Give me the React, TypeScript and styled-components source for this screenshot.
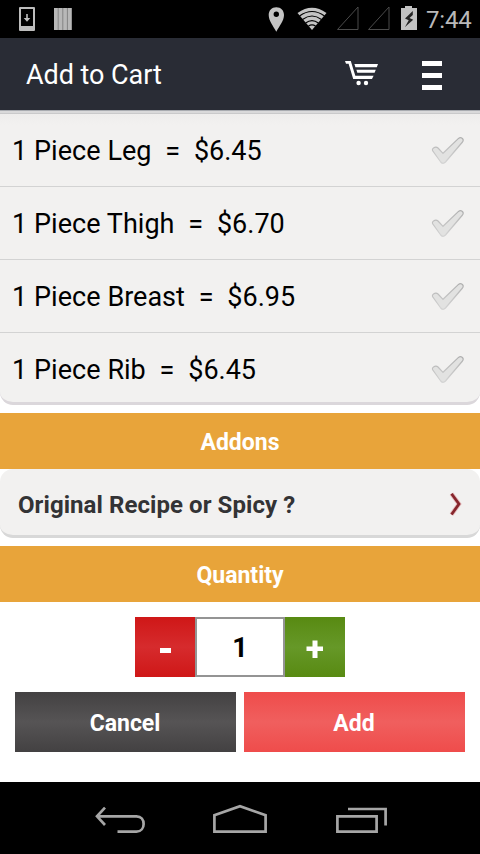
import React, { useState } from "react";
import styled, { createGlobalStyle } from "styled-components";

const GlobalStyle = createGlobalStyle`
  * { box-sizing: border-box; }
  body { margin: 0; background: #fff; font-family: Roboto, sans-serif; }
  button { font-family: inherit; border: 0; padding: 0; cursor: pointer; }
`;

const Screen = styled.div`
  width: 480px;
  height: 854px;
  display: flex;
  flex-direction: column;
  background: #fff;
  overflow: hidden;
`;

const StatusBar = styled.div`
  flex: none;
  height: 38px;
  background: #000;
  display: flex;
  justify-content: space-between;
`;

const StatusGroup = styled.div`
  display: flex;
`;

const Clock = styled.span`
  width: 54px;
  color: #b9b9b9;
  font-size: 24px;
  line-height: 40px;
  letter-spacing: -0.2px;
`;

const Header = styled.header`
  flex: none;
  height: 72px;
  background: #292c35;
  display: flex;
  align-items: center;
  padding-left: 26px;
`;

const Title = styled.h1`
  flex: 1;
  margin: 0;
  padding-top: 2px;
  color: #fff;
  font-size: 27px;
  font-weight: 400;
  line-height: 32px;
  letter-spacing: -0.05px;
`;

const IconButton = styled.button<{ $w: number }>`
  width: ${(p) => p.$w}px;
  height: 72px;
  background: none;
  svg { display: block; }
`;

const Options = styled.ul`
  flex: none;
  list-style: none;
  margin: 0;
  padding: 0;
  height: 295px;
  border-top: 1px solid #a8abb0;
  border-bottom: 3px solid #dbd7db;
  border-radius: 0 0 13px 13px;
  background: linear-gradient(#d9d9da 0 2px, #c9c9ca 2px 3px, #eeedec 3px, #f2f1f0 14px);
  padding-top: 3px;
`;

const OptionRow = styled.li`
  height: 73px;
  display: flex;
  align-items: center;
  justify-content: space-between;
  padding: 2px 15px 0 12px;
  border-bottom: 1px solid #d3d3d3;
  &:last-child { border-bottom: 0; height: 72px; }
`;

const OptionText = styled.span`
  font-size: 27px;
  line-height: 32px;
  word-spacing: 0.22px;
  color: #000;
  white-space: pre;
`;

const Band = styled.h2`
  flex: none;
  margin: 8px 0 0;
  height: 56px;
  line-height: 59px;
  text-align: center;
  font-size: 23px;
  font-weight: 700;
  color: #fff;
  background: #e8a43a;
`;

const AddonCard = styled.button`
  flex: none;
  width: 480px;
  height: 69px;
  display: flex;
  align-items: center;
  justify-content: space-between;
  padding: 5px 17px 0 18px;
  background: #f2f1f0;
  border-bottom: 3px solid #d8d8d8;
  border-radius: 13px;
`;

const AddonText = styled.span`
  font-size: 24px;
  font-weight: 700;
  letter-spacing: 0.07px;
  color: #333335;
  white-space: nowrap;
`;

const Stepper = styled.div`
  flex: none;
  margin: 15px auto 0;
  display: grid;
  grid-template-columns: 60px 90px 60px;
  grid-template-rows: 60px;
`;

const StepButton = styled.button<{ $edge: string; $mid: string }>`
  background: linear-gradient(${(p) => p.$edge}, ${(p) => p.$mid}, ${(p) => p.$edge});
  svg { display: block; }
`;

const Count = styled.div`
  border: 2px solid #949494;
  text-align: center;
  font-size: 27px;
  font-weight: 700;
  line-height: 59px;
  color: #000;
`;

const Actions = styled.div`
  flex: none;
  display: grid;
  grid-template-columns: 1fr 1fr;
  gap: 8px;
  padding: 15px 15px 30px;
`;

const ActionButton = styled.button<{ $edge: string; $mid: string }>`
  height: 60px;
  padding: 3px 1px 0 0;
  color: #fff;
  font-size: 23px;
  font-weight: 700;
  background: linear-gradient(${(p) => p.$edge}, ${(p) => p.$mid}, ${(p) => p.$edge});
`;

const NavBar = styled.nav`
  flex: none;
  height: 72px;
  background: #000;
  display: flex;
  justify-content: center;
`;

const NavButton = styled.button`
  width: 120px;
  height: 72px;
  background: none;
  svg { display: block; }
`;

const Check = () => (
  <svg width="34" height="30" viewBox="0 0 34 30">
    <defs>
      <linearGradient id="rim" x1="0" y1="0" x2="0" y2="1">
        <stop offset="0" stopColor="#b0b0b0" />
        <stop offset="1" stopColor="#d4d4d4" />
      </linearGradient>
    </defs>
    <path
      d="M1.5 14.5Q1 13 2.5 12Q5 10.2 7 12L12 17.3L27.5 2.4Q29.5 .9 31.4 2.5Q33 4.1 31.5 6L14.5 26Q12 28.6 9.7 26Z"
      fill="#e2e2e1"
      stroke="url(#rim)"
      strokeWidth="1.2"
    />
  </svg>
);

const options = [
  { name: "1 Piece Leg", price: "$6.45" },
  { name: "1 Piece Thigh", price: "$6.70" },
  { name: "1 Piece Breast", price: "$6.95" },
  { name: "1 Piece Rib", price: "$6.45" },
];

export default function App() {
  const [quantity, setQuantity] = useState(1);
  return (
    <>
      <GlobalStyle />
      <Screen>
        <StatusBar>
          <StatusGroup>
            <svg width="90" height="38" viewBox="0 0 90 38">
              <path fill="#bdbdbd" fillRule="evenodd" d="M20 7H34Q35 7 35 8V30Q35 31 34 31H20Q19 31 19 30V8Q19 7 20 7ZM21 9V26H33V9Z" />
              <path fill="#bdbdbd" d="M26.2 14H27.8V18H30.3L27 21.7L23.7 18H26.2Z" />
              <path fill="#b8b8b8" d="M54 8H71.8V30H54Z" />
              <path stroke="#777" strokeWidth=".8" d="M58.2 8V30M62.8 8V30M67.4 8V30" />
            </svg>
          </StatusGroup>
          <StatusGroup>
            <svg width="166" height="38" viewBox="260 0 166 38">
              <path fill="#c4c4c4" fillRule="evenodd" d="M276.3 7.2C281 7.2 284 10.5 284 15C284 20.5 279.5 26 276.3 31.7C273.1 26 268.7 20.5 268.7 15C268.7 10.5 271.7 7.2 276.3 7.2ZM276.3 11.5A2.7 2.7 0 1 0 276.3 16.9A2.7 2.7 0 1 0 276.3 11.5Z" />
              <path fill="#c4c4c4" d="M297.5 13Q312 2.5 326.5 13L312 30Z" />
              <path fill="none" stroke="#000" strokeWidth="1.2" d="M299.5 16Q312 7 324.5 16M302.5 19.5Q312 12.5 321.5 19.5M305.6 23Q312 18.2 318.4 23M308.3 26.2Q312 23.6 315.7 26.2" />
              <path fill="none" stroke="#4b4b4b" strokeWidth="1" d="M337.5 29.5H358V7ZM368.5 29.5H389V7Z" />
              <path fill="#c2c2c2" d="M405 6H412V8H417V30H401V8H405Z" />
              <path fill="#252525" d="M412.8 11L405 18.6L408.7 20.2L405 27L413.2 19.7L409.5 17.9L412.8 15Z" />
            </svg>
            <Clock>7:44</Clock>
          </StatusGroup>
        </StatusBar>
        <Header>
          <Title>Add to Cart</Title>
          <IconButton $w={60} aria-label="Cart">
            <svg width="60" height="72" viewBox="336 38 60 72">
              <g fill="#fff">
                <path d="M345 61H350.8L355.3 75.8H373.6L372 78.9H353.2L348.6 63.8H346Z" />
                <path d="M354.4 64H378L376.8 67.2H355.4ZM356.4 69.7H375.8L374.6 72.7H357.3Z" />
                <circle cx="358.6" cy="83" r="2.2" />
                <circle cx="366" cy="83" r="2.2" />
              </g>
            </svg>
          </IconButton>
          <IconButton $w={84} aria-label="Menu">
            <svg width="84" height="72" viewBox="396 38 84 72">
              <path fill="#fff" d="M422 61H442V66H422ZM422 73H442V78H422ZM422 85H442V90H422Z" />
            </svg>
          </IconButton>
        </Header>
        <Options>
          {options.map((o) => (
            <OptionRow key={o.name}>
              <OptionText>{`${o.name}  =  ${o.price}`}</OptionText>
              <Check />
            </OptionRow>
          ))}
        </Options>
        <Band>Addons</Band>
        <AddonCard>
          <AddonText>Original Recipe or Spicy ?</AddonText>
          <svg width="14" height="26" viewBox="0 0 14 26">
            <path fill="none" stroke="#d88688" strokeWidth="4.4" strokeOpacity=".5" d="M2.5 1.8L10 12L2.5 22.5" />
            <path fill="none" stroke="#86252c" strokeWidth="2.7" d="M2.5 1.8L10 12L2.5 22.5" />
          </svg>
        </AddonCard>
        <Band>Quantity</Band>
        <Stepper>
          <StepButton $edge="#cf1717" $mid="#d62b2d" aria-label="Decrease" onClick={() => setQuantity((q) => Math.max(1, q - 1))}>
            <svg width="60" height="60" viewBox="0 0 60 60"><path fill="#fff" d="M25 31H36V36H25Z" /></svg>
          </StepButton>
          <Count>{quantity}</Count>
          <StepButton $edge="#588a12" $mid="#669828" aria-label="Increase" onClick={() => setQuantity((q) => q + 1)}>
            <svg width="60" height="60" viewBox="0 0 60 60"><path fill="#fff" d="M27.5 23.5H32.5V29.5H38V34H32.5V41H27.5V34H21.5V29.5H27.5Z" /></svg>
          </StepButton>
        </Stepper>
        <Actions>
          <ActionButton $edge="#434142" $mid="#565455">Cancel</ActionButton>
          <ActionButton $edge="#ef4c4b" $mid="#f05f5e">Add</ActionButton>
        </Actions>
        <NavBar>
          <NavButton aria-label="Back">
            <svg width="120" height="72" viewBox="60 782 120 72">
              <path fill="none" stroke="#a6a6a6" strokeWidth="2.7" d="M105 807.7L97 816.3L105 825M97 816.3H136.5C146 816.3 146 831.6 136.5 831.6H117.5" />
            </svg>
          </NavButton>
          <NavButton aria-label="Home">
            <svg width="120" height="72" viewBox="180 782 120 72">
              <path fill="none" stroke="#a6a6a6" strokeWidth="2.7" d="M214.4 831.6V815.2L240 806.2L265.6 815.2V831.6Z" />
            </svg>
          </NavButton>
          <NavButton aria-label="Recent apps">
            <svg width="120" height="72" viewBox="300 782 120 72">
              <path fill="none" stroke="#a6a6a6" strokeWidth="2.7" d="M337.4 816.4H376.6V831.6H337.4ZM348 809H385.6V825.5" />
            </svg>
          </NavButton>
        </NavBar>
      </Screen>
    </>
  );
}
